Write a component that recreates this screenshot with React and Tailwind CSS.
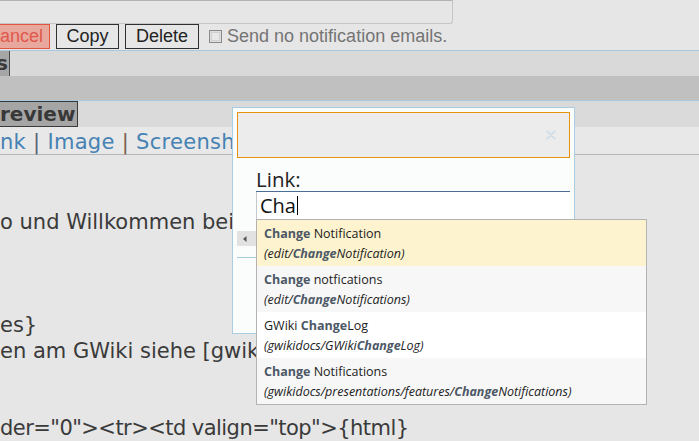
import React from "react";

const editorLines = [
  "",
  "",
  "o und Willkommen bei GWiki, dem Wiki",
  "",
  "",
  "",
  "es}",
  "en am GWiki siehe [gwikidocs/Changes]",
  "",
  "",
  'der="0"><tr><td valign="top">{html}',
];

const items = [
  { pre: "", hl: "Change", post: " Notification", spre: "(edit/", shl: "Change", spost: "Notification)", bg: "bg-[#fdf3cf]" },
  { pre: "", hl: "Change", post: " notfications", spre: "(edit/", shl: "Change", spost: "Notifications)", bg: "bg-[#f7f7f7]" },
  { pre: "GWiki ", hl: "Change", post: "Log", spre: "(gwikidocs/GWiki", shl: "Change", spost: "Log)", bg: "bg-white" },
  { pre: "", hl: "Change", post: " Notifications", spre: "(gwikidocs/presentations/features/", shl: "Change", spost: "Notifications)", bg: "bg-[#f7f7f7]" },
];

export default function App() {
  return (
    <div className="relative w-[699px] h-[441px] overflow-hidden bg-[#e6e6e6]">
      {/* top text input */}
      <div className="h-[24px] w-[453px] border-t border-r border-b border-[#c6c6c6] border-t-[#b2b2b2] rounded-br-[3px] bg-[#e6e6e6]" />

      {/* buttons row */}
      <div className="h-[26px] flex items-start font-['Liberation_Sans',Arial,sans-serif] text-[18px] whitespace-nowrap">
        <div className="ml-[-20px] h-[25px] px-[6px] border border-[#e2553f] bg-[#e9a89e] text-[#e0584a] leading-[23px]">Cancel</div>
        <div className="ml-[6px] w-[63px] h-[25px] border border-[#303030] text-[#222] leading-[23px] text-center">Copy</div>
        <div className="ml-[6px] w-[74px] h-[25px] border border-[#303030] text-[#222] leading-[23px] text-center">Delete</div>
        <div className="ml-[10px] mt-[6px] w-[13px] h-[13px] border border-[#8a8a8a] bg-[#dedede] flex items-center justify-center">
          <div className="w-[9px] h-[9px] bg-[#e8e8e8] border border-[#d0d0d0]" />
        </div>
        <div className="ml-[5px] text-[#747474] leading-[25px]">Send no notification emails.</div>
      </div>

      {/* tab band 1 */}
      <div className="h-[26px] border-t border-[#a8c8e0] bg-[#d9d9d9] flex">
        <div className="w-[10px] h-[25px] bg-[#a6a6a6] border-r border-[#4a4a4a] flex justify-end pr-[1px] overflow-hidden font-['DejaVu_Sans',sans-serif] font-bold text-[20px] leading-[24px] text-[#3a3a3a]">
          s
        </div>
      </div>
      <div className="h-[24px] bg-[#c0c0c0]" />

      {/* tab band 2 */}
      <div className="h-[27px] border-t border-[#a8c8e0] bg-[#dadada] flex">
        <div className="w-[78px] h-[26px] bg-[#a5a5a5] border-t border-r border-b border-[#3a3a3a] font-['DejaVu_Sans',sans-serif] font-bold text-[20px] leading-[24px] text-[#383838] overflow-hidden whitespace-nowrap">
          review
        </div>
      </div>

      {/* toolbar */}
      <div className="h-[28px] border-b border-[#b6b6b6] bg-[#e8e8e8] pt-[2px] font-['DejaVu_Sans',sans-serif] text-[21px] leading-[26px] tracking-[0.3px] text-[#4682b4] whitespace-nowrap">
        nk <span className="text-[#5a6275]">|</span> Image <span className="text-[#7a6250]">|</span> Screenshot <span>|</span> Table
      </div>

      {/* editor */}
      <div className="pt-[3px] font-['DejaVu_Sans',sans-serif] text-[21px] leading-[25.8px] text-[#3a3a3a] whitespace-pre">
        {editorLines.map((l, i) => (
          <div key={i} className={`h-[25.8px] ${i === 10 ? "tracking-[-0.55px]" : ""}`}>{l === "" ? "\u00a0" : l}</div>
        ))}
      </div>

      {/* dialog */}
      <div className="absolute left-[232px] top-[107px] w-[343px] h-[227px] bg-[#fbfdfd] border border-[#a9cde3] font-['Open_Sans',sans-serif]">
        <div className="mx-[4px] mt-[4px] h-[46px] border border-[#e8920c] bg-[#ececec] flex items-center justify-end pr-[13px]">
          <svg width="10" height="10" viewBox="0 0 10 10">
            <path d="M1.5 1.5 L8.5 8.5 M8.5 1.5 L1.5 8.5" stroke="#d3e0ea" strokeWidth="2.4" strokeLinecap="round" />
          </svg>
        </div>
        <div className="ml-[23px] mr-[4px] mt-[9px]">
          <div className="h-[25px] border-b border-[#4a6e96] text-[20.5px] leading-[24px] text-[#222]">Link:</div>
          <div className="h-[27px] bg-white border-l border-[#c8c8c8] pl-[3px] text-[20px] leading-[27px] text-[#111] flex items-center">
            <span>Cha</span>
            <span className="inline-block w-px h-[19px] bg-black ml-[1px]" />
          </div>
        </div>
        <div className="mt-[12px] ml-[4px] w-[19px] h-[15px] bg-[#e2e2e2] flex items-center pl-[6px]">
          <svg width="4" height="6" viewBox="0 0 4 6">
            <path d="M3.5 0 L0 3 L3.5 6 Z" fill="#555" />
          </svg>
        </div>
        <div className="mt-[11px] mx-[4px] border-t border-[#a8c8dc]" />
      </div>

      {/* autocomplete list */}
      <div className="absolute left-[256px] top-[219px] w-[391px] border border-[#b3b3b3] bg-white font-['Open_Sans',sans-serif] text-[#222]">
        {items.map((it, i) => (
          <div key={i} className={`h-[46px] px-[7px] pt-[4px] whitespace-nowrap ${it.bg}`}>
            <div className="text-[12.5px] leading-[20px]">
              {it.pre}
              <span className="font-bold text-[#4c5866]">{it.hl}</span>
              {it.post}
            </div>
            <div className="text-[12.5px] leading-[20px] italic">
              {it.spre}
              <span className="font-bold text-[#4c5866]">{it.shl}</span>
              {it.spost}
            </div>
          </div>
        ))}
      </div>
    </div>
  );
}
